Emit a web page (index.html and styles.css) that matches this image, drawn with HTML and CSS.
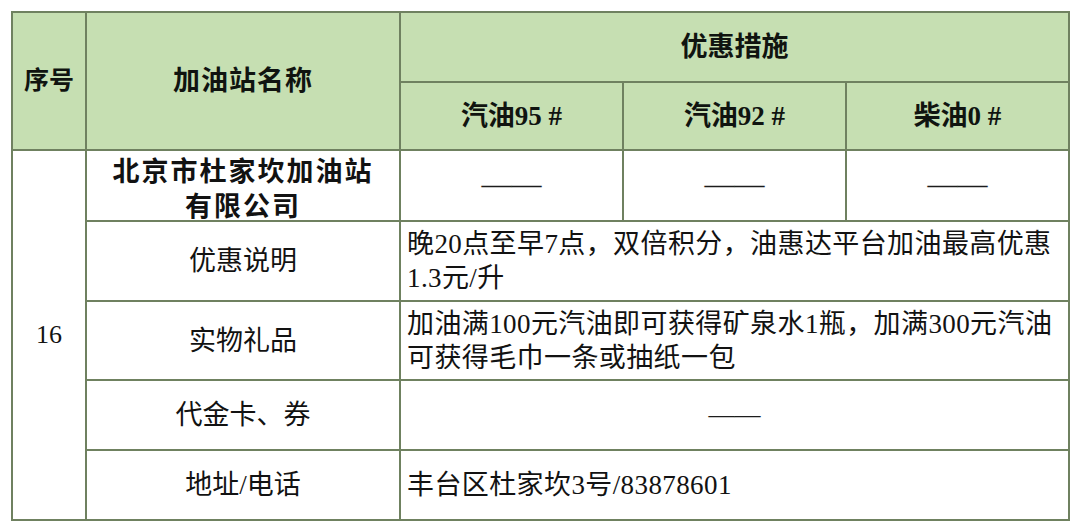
FILE: index.html
```html
<!DOCTYPE html>
<html lang="zh">
<head>
<meta charset="utf-8">
<title>加油站优惠</title>
<link rel="stylesheet" href="styles.css">
</head>
<body>
<table class="sheet">
  <colgroup>
    <col class="c-no">
    <col class="c-name">
    <col class="c-fuel">
    <col class="c-fuel">
    <col class="c-fuel">
  </colgroup>
  <thead>
    <tr class="h1">
      <th rowspan="2" class="narrow">序号</th>
      <th rowspan="2" class="wide">加油站名称</th>
      <th colspan="3">优惠措施</th>
    </tr>
    <tr class="h2">
      <th>汽油95 #</th>
      <th>汽油92 #</th>
      <th>柴油0 #</th>
    </tr>
  </thead>
  <tbody>
    <tr class="r1">
      <td rowspan="5" class="no">16</td>
      <td class="station"><div class="station-name">北京市杜家坎加油站<br>有限公司</div></td>
      <td class="dash">——</td>
      <td class="dash">——</td>
      <td class="dash">——</td>
    </tr>
    <tr class="r2">
      <td class="label">优惠说明</td>
      <td colspan="3" class="text">晚20点至早7点，双倍积分，油惠达平台加油最高优惠<br>1.3元/升</td>
    </tr>
    <tr class="r3">
      <td class="label">实物礼品</td>
      <td colspan="3" class="text">加油满100元汽油即可获得矿泉水1瓶，加满300元汽油<br>可获得毛巾一条或抽纸一包</td>
    </tr>
    <tr class="r4">
      <td class="label">代金卡、券</td>
      <td colspan="3" class="dash dash-small">——</td>
    </tr>
    <tr class="r5">
      <td class="label">地址/电话</td>
      <td colspan="3" class="text">丰台区杜家坎3号/83878601</td>
    </tr>
  </tbody>
</table>
</body>
</html>
```
FILE: styles.css
```css
html, body {
  margin: 0;
  padding: 0;
  background: #ffffff;
}

body {
  padding: 11px 0 0 11px;
  font-family: "Liberation Serif", "Noto Sans CJK SC", serif;
  color: #121212;
}

.sheet {
  border-collapse: collapse;
  table-layout: fixed;
  width: 1058px;
}

.c-no { width: 74px; }
.c-name { width: 314px; }
.c-fuel { width: 223px; }

.sheet th,
.sheet td {
  border: 2px solid #6f8160;
  padding: 0 7px;
  vertical-align: middle;
  text-align: center;
  font-size: 27px;
  line-height: 30px;
}

.sheet th {
  background: #c6dfb2;
  font-weight: 700;
  color: #101410;
}

.sheet th.narrow {
  font-size: 25px;
}

.sheet th.wide {
  letter-spacing: 1px;
}

.h1 { height: 70px; }
.h2 { height: 68px; }
.r1 { height: 71px; }
.r2 { height: 80px; }
.r3 { height: 79px; }
.r4 { height: 70px; }
.r5 { height: 70px; }

.sheet td.no {
  font-size: 26px;
}

.sheet td.station {
  font-weight: 700;
  letter-spacing: 2px;
  padding-top: 0;
  padding-bottom: 0;
}

.station-name {
  height: 60px;
  line-height: 35px;
  margin-top: -2px;
}

.sheet td.text {
  text-align: left;
  padding-left: 6px;
  letter-spacing: 0.4px;
  line-height: 34px;
}

.sheet td.dash {
  font-family: "Liberation Serif", serif;
  font-size: 30px;
  color: #1c1c1c;
  padding-bottom: 4px;
}

.sheet td.dash-small {
  font-size: 26px;
  padding-bottom: 0;
}
```
